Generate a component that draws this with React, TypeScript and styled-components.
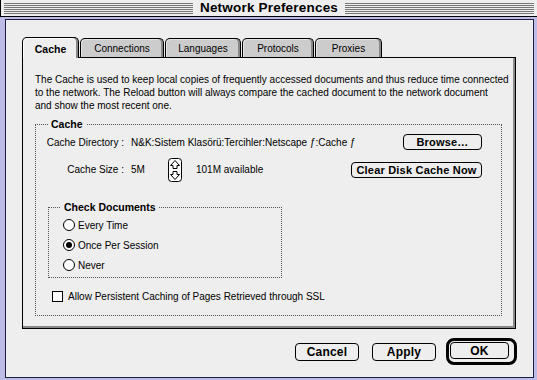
import React from 'react';
import styled, { createGlobalStyle } from 'styled-components';

// Classic Mac OS "Network Preferences" dialog, Cache tab selected.

const GlobalStyle = createGlobalStyle`
  html, body {
    margin: 0;
    padding: 0;
    background: #ffffff;
  }
  body {
    font-family: 'Liberation Sans', Arial, sans-serif;
    color: #000;
  }
`;

const BOLD = `'Liberation Sans', Arial, sans-serif`;

const Window = styled.div`
  width: 537px;
  height: 380px;
  box-sizing: border-box;
  display: flex;
  flex-direction: column;
  background: #bcbce6;
  overflow: hidden;
`;

const TitleBar = styled.div`
  height: 16px;
  flex: none;
  display: flex;
  align-items: center;
  padding: 0 3px 0 3px;
  background: #eeeeee;
  border-bottom: 1px solid #000;
  border-left: 1px solid #000;
`;

const Stripes = styled.div`
  flex: 1;
  height: 12px;
  margin-top: 1px;
  background: repeating-linear-gradient(to bottom, #777 0 1px, #eeeeee 1px 2px);
`;

const Title = styled.div`
  padding: 0 7px;
  font-family: ${BOLD};
  font-weight: 700;
  font-size: 13.5px;
  letter-spacing: 0.2px;
  line-height: 16px;
`;

const Body = styled.div`
  flex: 1;
  margin: 2px 3px 2px 5px;
  border: 1px solid #1c1c44;
  background: #eeeeee;
  padding: 17px 15px 0 16px;
  display: flex;
  flex-direction: column;
`;

const TabRow = styled.div`
  display: flex;
  align-items: flex-end;
  gap: 1px;
  height: 21px;
  position: relative;
  z-index: 1;
  margin-bottom: -1px;
`;

const Tab = styled.div<{ $active?: boolean; $w: number }>`
  width: ${(p) => p.$w}px;
  height: ${(p) => (p.$active ? 21 : 19)}px;
  margin-bottom: ${(p) => (p.$active ? 0 : 1)}px;
  box-sizing: border-box;
  border: 1px solid #000;
  border-bottom: none;
  border-radius: 5px 5px 0 0;
  background: ${(p) => (p.$active ? '#eeeeee' : '#cccccc')};
  box-shadow: inset -2px 0 0 #888, inset 1px 1px 0 ${(p) => (p.$active ? '#fff' : '#e4e4e4')};
  display: flex;
  align-items: center;
  justify-content: center;
  font-size: ${(p) => (p.$active ? 10.5 : 10)}px;
  font-weight: ${(p) => (p.$active ? 700 : 400)};
  padding-top: ${(p) => (p.$active ? 1 : 0)}px;
`;

const Panel = styled.div`
  width: 494px;
  box-sizing: border-box;
  border: 1px solid #000;
  box-shadow: inset -2px -2px 0 #888;
  padding: 15px 13px 12px 12px;
`;

const Description = styled.p`
  margin: 0;
  font-size: 10px;
  line-height: 13px;
  white-space: nowrap;
`;

const Group = styled.fieldset<{ $width?: number }>`
  margin: 0;
  padding: 0;
  min-width: 0;
  border: 1px dotted #555;
  ${(p) => (p.$width ? `width: ${p.$width}px; box-sizing: border-box;` : '')}
`;

const Legend = styled.legend`
  margin-left: 12px;
  padding: 0 3px;
  font-family: ${BOLD};
  font-weight: 700;
  font-size: 10.5px;
  line-height: 13px;
`;

const CacheGroup = styled(Group)`
  margin-top: 6px;
`;

const GroupInner = styled.div`
  padding: 3px 0 12px 0;
  display: flex;
  flex-direction: column;
`;

const Row = styled.div<{ $h: number; $mt?: number }>`
  display: flex;
  align-items: center;
  height: ${(p) => p.$h}px;
  margin-top: ${(p) => p.$mt ?? 0}px;
  font-size: 10px;
  padding-right: 19px;
`;

const Label = styled.span`
  width: 88px;
  text-align: right;
  margin-right: 7px;
  white-space: nowrap;
`;

const Value = styled.span<{ $w?: number }>`
  white-space: nowrap;
  ${(p) => (p.$w ? `width: ${p.$w}px;` : 'flex: 1;')}
`;

const Button = styled.button<{ $w: number; $h?: number; $size?: number }>`
  width: ${(p) => p.$w}px;
  height: ${(p) => p.$h ?? 16}px;
  box-sizing: border-box;
  border: 1px solid #000;
  border-radius: 4px;
  background: #eeeeee;
  padding: 0;
  margin: 0;
  font-family: ${BOLD};
  font-weight: 700;
  font-size: ${(p) => p.$size ?? 11}px;
  letter-spacing: 0.2px;
  color: #000;
  display: flex;
  align-items: center;
  justify-content: center;
  flex: none;
`;

const PushRight = styled.div`
  margin-left: auto;
  display: flex;
`;

const StepperBox = styled.svg`
  flex: none;
  margin-right: 14px;
`;

const CheckGroup = styled(Group)`
  margin: 20px 0 0 12px;
`;

const RadioList = styled.div`
  padding: 1px 0 2px 14px;
  display: flex;
  flex-direction: column;
`;

const RadioRow = styled.label`
  display: flex;
  align-items: center;
  height: 20px;
  gap: 3px;
  font-size: 10px;
`;

const RadioCircle = styled.span<{ $on?: boolean }>`
  width: 12px;
  height: 12px;
  box-sizing: border-box;
  border: 1px solid #000;
  border-radius: 50%;
  background: #fff;
  display: flex;
  align-items: center;
  justify-content: center;
  &::after {
    content: '';
    width: 6px;
    height: 6px;
    border-radius: 50%;
    background: ${(p) => (p.$on ? '#000' : 'transparent')};
  }
`;

const CheckRow = styled.label`
  display: flex;
  align-items: center;
  height: 14px;
  margin: 11px 0 0 16px;
  gap: 5px;
  font-size: 10px;
`;

const CheckBox = styled.span`
  width: 11px;
  height: 11px;
  box-sizing: border-box;
  border: 1px solid #000;
  background: #fff;
`;

const Footer = styled.div`
  display: flex;
  justify-content: flex-end;
  align-items: center;
  margin-top: 9px;
  width: 495px;
  gap: 13px;
`;

const DefaultRing = styled.div`
  width: 71px;
  height: 27px;
  box-sizing: border-box;
  border: 3px solid #000;
  border-radius: 8px;
  padding: 1px;
  margin-left: -3px;
  display: flex;
`;

const tabs = [
  { label: 'Cache', w: 57, active: true },
  { label: 'Connections', w: 84 },
  { label: 'Languages', w: 76 },
  { label: 'Protocols', w: 72 },
  { label: 'Proxies', w: 67 },
];

function Stepper() {
  return (
    <StepperBox width="14" height="24" viewBox="0 0 14 24">
      <rect x="0.5" y="0.5" width="13" height="23" rx="3" fill="#fff" stroke="#000" />
      <polygon points="7,2.5 11.5,7.5 9,7.5 9,10.5 5,10.5 5,7.5 2.5,7.5" fill="none" stroke="#000" />
      <polygon points="7,21.5 11.5,16.5 9,16.5 9,13.5 5,13.5 5,16.5 2.5,16.5" fill="none" stroke="#000" />
    </StepperBox>
  );
}

export default function App() {
  return (
    <>
      <GlobalStyle />
      <Window>
        <TitleBar>
          <Stripes />
          <Title>Network Preferences</Title>
          <Stripes />
        </TitleBar>
        <Body>
          <TabRow>
            {tabs.map((t) => (
              <Tab key={t.label} $w={t.w} $active={t.active}>
                {t.label}
              </Tab>
            ))}
          </TabRow>
          <Panel>
            <Description>
              The Cache is used to keep local copies of frequently accessed documents and thus reduce time connected
              <br />
              to the network. The Reload button will always compare the cached document to the network document
              <br />
              and show the most recent one.
            </Description>

            <CacheGroup>
              <Legend>Cache</Legend>
              <GroupInner>
                <Row $h={16}>
                  <Label>Cache Directory :</Label>
                  <Value>N&amp;K:Sistem Klasörü:Tercihler:Netscape ƒ:Cache ƒ</Value>
                  <Button $w={79}>Browse…</Button>
                </Row>
                <Row $h={23} $mt={8}>
                  <Label>Cache Size :</Label>
                  <Value $w={37}>5M</Value>
                  <Stepper />
                  <Value $w={120}>101M available</Value>
                  <PushRight>
                    <Button $w={131}>Clear Disk Cache Now</Button>
                  </PushRight>
                </Row>

                <CheckGroup $width={234}>
                  <Legend>Check Documents</Legend>
                  <RadioList>
                    <RadioRow>
                      <RadioCircle />
                      Every Time
                    </RadioRow>
                    <RadioRow>
                      <RadioCircle $on />
                      Once Per Session
                    </RadioRow>
                    <RadioRow>
                      <RadioCircle />
                      Never
                    </RadioRow>
                  </RadioList>
                </CheckGroup>

                <CheckRow>
                  <CheckBox />
                  Allow Persistent Caching of Pages Retrieved through SSL
                </CheckRow>
              </GroupInner>
            </CacheGroup>
          </Panel>

          <Footer>
            <Button $w={64} $h={18} $size={12}>
              Cancel
            </Button>
            <Button $w={64} $h={18} $size={12}>
              Apply
            </Button>
            <DefaultRing>
              <Button $w={59} $h={17} $size={12}>
                OK
              </Button>
            </DefaultRing>
          </Footer>
        </Body>
      </Window>
    </>
  );
}
